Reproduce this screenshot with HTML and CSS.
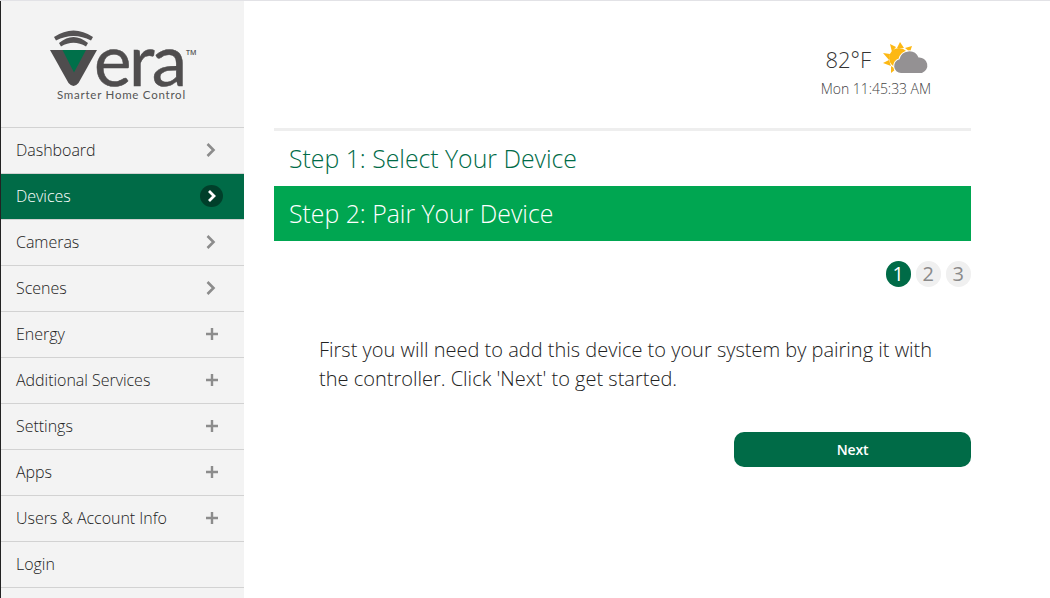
FILE: index.html
```html
<!DOCTYPE html>
<html lang="en">
<head>
<meta charset="utf-8">
<title>Vera</title>
<link rel="stylesheet" href="styles.css">
</head>
<body>
<div class="app">
  <aside class="sidebar">
    <div class="brand">
      <div class="logo">
        <svg class="logo-mark" width="50" height="60" viewBox="0 0 50 60">
          <path class="arc" d="M4 9 Q23.500 -4 43 9 L41 12.500 Q23.500 3.500 6 12.500 Z" />
          <path class="arc" d="M9 15 Q23.500 3 38 15 L36 18.500 Q23.500 11 11 18.500 Z" />
          <path class="v-dark" d="M0 22 H47 L28.500 55 Q23.500 61 18.500 55 Z" />
          <polygon class="v-green" points="12.500,22 36,22 24,44.500" />
        </svg>
        <span class="logo-word">era</span>
        <span class="logo-tm">TM</span>
        <span class="logo-tag">Smarter Home Control</span>
      </div>
    </div>
    <nav class="nav">
      <a class="nav-item"><span>Dashboard</span><svg class="ico" width="12" height="16" viewBox="0 0 12 16"><path d="M2.500 2 L8.500 8 L2.500 14"/></svg></a>
      <a class="nav-item active"><span>Devices</span><span class="ico-badge"><svg class="ico" width="12" height="14" viewBox="0 0 12 14"><path d="M3 2 L8 7 L3 12"/></svg></span></a>
      <a class="nav-item"><span>Cameras</span><svg class="ico" width="12" height="16" viewBox="0 0 12 16"><path d="M2.500 2 L8.500 8 L2.500 14"/></svg></a>
      <a class="nav-item"><span>Scenes</span><svg class="ico" width="12" height="16" viewBox="0 0 12 16"><path d="M2.500 2 L8.500 8 L2.500 14"/></svg></a>
      <a class="nav-item"><span>Energy</span><svg class="plus" width="12" height="12" viewBox="0 0 12 12"><path d="M6 0 V12 M0 6 H12"/></svg></a>
      <a class="nav-item"><span>Additional Services</span><svg class="plus" width="12" height="12" viewBox="0 0 12 12"><path d="M6 0 V12 M0 6 H12"/></svg></a>
      <a class="nav-item"><span>Settings</span><svg class="plus" width="12" height="12" viewBox="0 0 12 12"><path d="M6 0 V12 M0 6 H12"/></svg></a>
      <a class="nav-item"><span>Apps</span><svg class="plus" width="12" height="12" viewBox="0 0 12 12"><path d="M6 0 V12 M0 6 H12"/></svg></a>
      <a class="nav-item"><span>Users &amp; Account Info</span><svg class="plus" width="12" height="12" viewBox="0 0 12 12"><path d="M6 0 V12 M0 6 H12"/></svg></a>
      <a class="nav-item"><span>Login</span></a>
    </nav>
  </aside>
  <main class="main">
    <header class="top">
      <div class="weather">
        <div class="weather-row">
          <span class="temp">82°F</span>
          <svg class="weather-icon" width="46" height="32" viewBox="0 0 46 32">
            <g class="sun">
              <polygon points="17,0 21,6 14,6"/>
              <polygon points="29,4 27,10 22,6"/>
              <polygon points="7,2 13,5 9,10"/>
              <polygon points="0,11 7,12 6,18"/>
              <polygon points="0,21 6,18 8,24"/>
              <polygon points="8,31 8,24 13,27"/>
              <circle cx="16" cy="16" r="10"/>
            </g>
            <path class="cloud" d="M18 31 A7 7 0 0 1 16.500 17.200 A10 10 0 0 1 35.500 15.500 A8 8 0 0 1 39 31 Z"/>
          </svg>
        </div>
        <div class="clock">Mon 11:45:33 AM</div>
      </div>
    </header>
    <section class="wizard">
      <h2 class="step">Step 1: Select Your Device</h2>
      <h2 class="step current">Step 2: Pair Your Device</h2>
      <div class="dots">
        <span class="dot on">1</span>
        <span class="dot">2</span>
        <span class="dot">3</span>
      </div>
      <p class="intro">First you will need to add this device to your system by pairing it with the controller. Click 'Next' to get started.</p>
      <div class="actions"><button class="next" type="button">Next</button></div>
    </section>
  </main>
</div>
</body>
</html>
```
FILE: styles.css
```css
* { box-sizing: border-box; }
html, body { margin: 0; height: 100%; overflow: hidden; }
body { background: #fff; font-family: "Open Sans", sans-serif; color: #333; }
.app { display: flex; height: 598px; border-top: 1px solid #e2e2e6; }
.sidebar { width: 244px; flex: none; background: #f3f3f3; border-left: 1px solid #222; }
.brand { height: 126px; padding: 27px 0 0 49px; }
.logo { position: relative; width: 146px; height: 76px; }
.logo-mark { position: absolute; left: 0; top: 0; }
.arc { fill: #555354; }
.v-dark { fill: #4f4d4e; }
.v-green { fill: #00704a; }
.logo-word { position: absolute; left: 44px; top: 1px; font-family: "Lato", sans-serif; font-size: 71px; line-height: 60px; font-weight: 400; color: #4f4d4e; letter-spacing: -2.500px; -webkit-text-stroke: .5px #4f4d4e; }
.logo-tm { position: absolute; left: 136px; top: 21px; font-size: 7px; line-height: 8px; font-weight: 600; color: #555; }
.logo-tag { position: absolute; left: 7px; top: 60px; font-family: "Lato", sans-serif; font-size: 11.500px; line-height: 14px; font-weight: 400; color: #555; letter-spacing: .75px; white-space: nowrap; }
.nav { border-top: 1px solid #d2d2d2; }
.nav-item { display: flex; align-items: center; justify-content: space-between; height: 46px; padding: 0 27px 2px 15px; border-bottom: 1px solid #d2d2d2; font-size: 16px; font-weight: 300; color: #222; letter-spacing: -.03px; }
.nav-item.active { background: #006b47; color: #fff; padding-right: 21px; }
.ico { fill: none; stroke: #8c8c8c; stroke-width: 2.600; }
.plus { fill: none; stroke: #8c8c8c; stroke-width: 2.400; margin-right: -1px; }
.ico-badge { display: flex; align-items: center; justify-content: center; width: 23px; height: 22px; border-radius: 50%; background: #003f2a; }
.ico-badge .ico { stroke: #fff; stroke-width: 2.800; }
.main { flex: 1; padding: 0 79px 0 30px; }
.top { height: 127px; display: flex; justify-content: flex-end; padding: 40px 42px 0 0; }
.weather { width: 110px; display: flex; flex-direction: column; align-items: flex-end; }
.weather-row { display: flex; align-items: center; gap: 12px; height: 36px; }
.weather-icon { margin-bottom: 2px; }
.temp { font-size: 22px; font-weight: 300; color: #333; line-height: 36px; }
.clock { margin: 2px -2px 0 0; font-size: 14px; font-weight: 300; line-height: 20px; color: #444; white-space: nowrap; letter-spacing: -.05px; }
.sun { fill: #fdb813; }
.cloud { fill: #949193; stroke: #fff; stroke-width: 2; paint-order: stroke; }
.wizard { border-top: 3px solid #eeeeee; }
.step { margin: 0; height: 55px; padding-left: 15px; font-size: 24.800px; font-weight: 300; line-height: 54px; color: #006b47; }
.step.current { background: #00a651; color: #fff; }
.dots { display: flex; justify-content: flex-end; gap: 4.500px; padding-top: 20px; }
.dot { width: 25.500px; height: 25.500px; border-radius: 50%; background: #f0f0f0; color: #8a8a8a; font-size: 20px; line-height: 26px; text-align: center; font-weight: 400; }
.dot.on { background: #006b47; color: #fff; }
.intro { margin: 48px 0 0; padding: 0 30px 0 45px; font-size: 20px; font-weight: 300; line-height: 29px; color: #222; }
.actions { display: flex; justify-content: flex-end; margin-top: 39px; }
.next { width: 237px; height: 35px; border: 0; border-radius: 10px; background: #006b47; color: #fff; font-family: "Open Sans", sans-serif; font-size: 14px; font-weight: 600; letter-spacing: -.2px; padding: 0; }
```
